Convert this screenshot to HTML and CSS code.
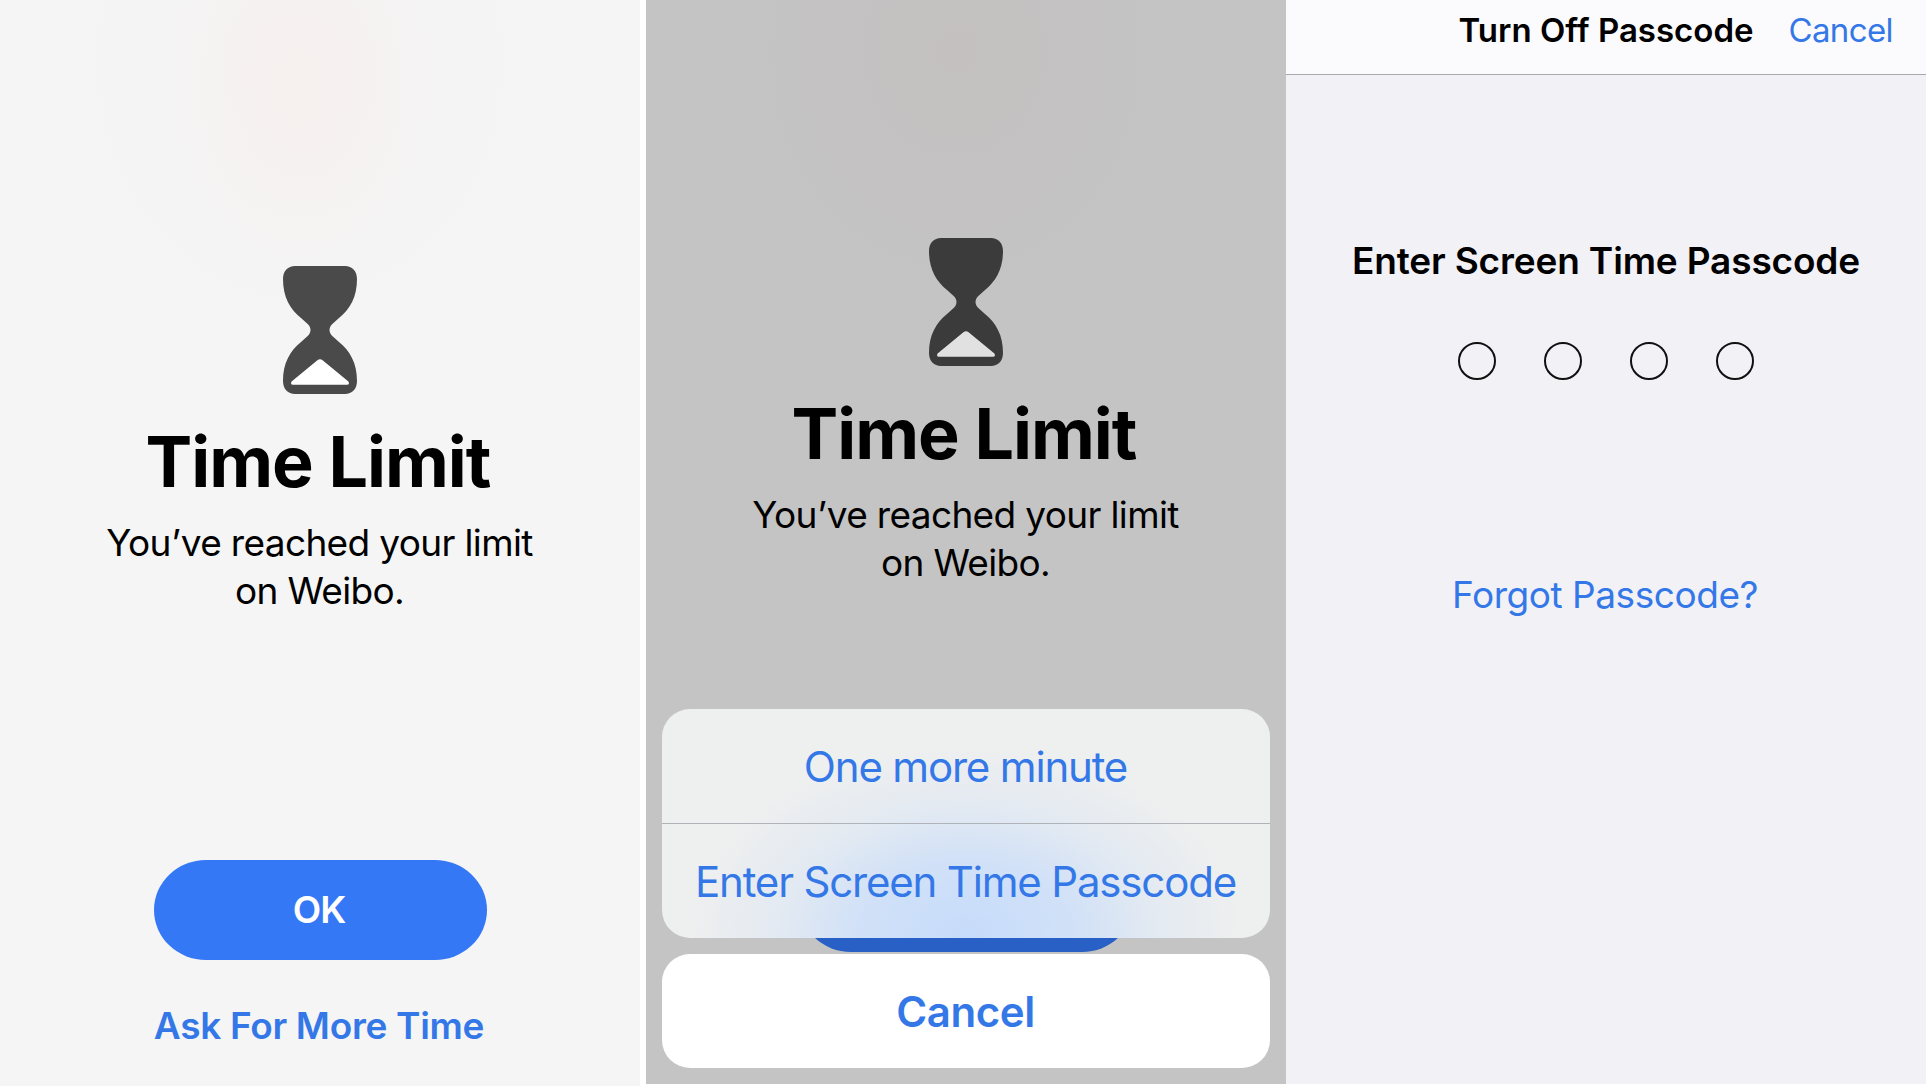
FILE: index.html
```html
<!doctype html>
<html lang="en">
<head>
<meta charset="utf-8">
<title>Screen Time</title>
<link rel="stylesheet" href="styles.css">
</head>
<body>
<div class="screens">

  <section class="screen limit">
    <svg class="hourglass" viewBox="0 0 74 128">
      <path class="glass" d="M12 0H62C69 0 74 5 74 13C74 31 67 43 56 52L51 56.500C45 61 45 67 51 71.500L56 76C67 85 74 97 74 115C74 123 69 128 62 128H12C5 128 0 123 0 115C0 97 7 85 18 76L23 71.500C29 67 29 61 23 56.500L18 52C7 43 0 31 0 13C0 5 5 0 12 0Z"/>
      <path class="sand" d="M34.4 94.3Q37 92 39.6 94.3L65.4 115.4Q67 118.5 64 118.7H10Q7 118.5 8.600 115.4Z"/>
    </svg>
    <h1>Time Limit</h1>
    <p class="message">You’ve reached your limit<br>on Weibo.</p>
    <button class="ok">OK</button>
    <a class="ask">Ask For More Time</a>
  </section>

  <section class="screen limit dimmed">
    <svg class="hourglass" viewBox="0 0 74 128">
      <path class="glass" d="M12 0H62C69 0 74 5 74 13C74 31 67 43 56 52L51 56.500C45 61 45 67 51 71.500L56 76C67 85 74 97 74 115C74 123 69 128 62 128H12C5 128 0 123 0 115C0 97 7 85 18 76L23 71.500C29 67 29 61 23 56.500L18 52C7 43 0 31 0 13C0 5 5 0 12 0Z"/>
      <path class="sand" d="M34.4 94.3Q37 92 39.6 94.3L65.4 115.4Q67 118.5 64 118.7H10Q7 118.5 8.600 115.4Z"/>
    </svg>
    <h1>Time Limit</h1>
    <p class="message">You’ve reached your limit<br>on Weibo.</p>
    <div class="ok"></div>
    <div class="sheet">
      <div class="actions">
        <a class="minute">One more minute</a>
        <a class="enter">Enter Screen Time Passcode</a>
      </div>
      <a class="dismiss">Cancel</a>
    </div>
  </section>

  <section class="screen passcode">
    <header class="navbar">
      <h2>Turn Off Passcode</h2>
      <a class="nav-cancel">Cancel</a>
    </header>
    <h3>Enter Screen Time Passcode</h3>
    <div class="digits">
      <span></span>
      <span></span>
      <span></span>
      <span></span>
    </div>
    <a class="forgot">Forgot Passcode?</a>
  </section>

</div>
</body>
</html>
```
FILE: styles.css
```css
body,
h1,
h2,
h3,
p {
    margin: 0;
    padding: 0;
}
body {
    background: #fff;
    font-family: Inter, "Liberation Sans", sans-serif;
    font-size: 37px;
    line-height: 48px;
    color: #000;
}
a {
    color: #3478e8;
    white-space: nowrap;
}
.screens {
    display: flex;
    align-items: flex-start;
    width: 1926px;
    height: 1086px;
    overflow: hidden;
}
.screen {
    box-sizing: border-box;
    display: flex;
    flex-direction: column;
    align-items: center;
    position: relative;
    width: 640px;
    height: 1084px;
}

/* time limit */
.limit {
    height: 1086px;
    padding: 266px 0 36px;
    margin-right: 6px;
    background:
        radial-gradient(ellipse 130px 180px at 300px 90px, rgba(248, 238, 234, .5), rgba(248, 238, 234, 0)),
        radial-gradient(ellipse 230px 270px at 300px 60px, rgba(244, 240, 241, .7), rgba(244, 240, 241, 0)),
        #f5f5f5;
    text-align: center;
}
.hourglass {
    width: 74px;
    height: 128px;
    flex: none;
}
.glass {
    fill: #4a4a4a;
}
.sand {
    fill: #fff;
}
h1 {
    margin-top: 25px;
    padding-right: 4px;
    font-size: 70px;
    line-height: 85px;
    font-weight: 700;
    letter-spacing: -1px;
}
.message {
    margin-top: 15px;
    padding-right: 1px;
    letter-spacing: -0.65px;
}
.ok {
    width: 333px;
    height: 100px;
    margin-top: auto;
    padding: 0 2px 0 0;
    border: 0;
    border-radius: 52px / 50px;
    background: #3478f6;
    color: #fff;
    font: 600 37px/48px Inter, "Liberation Sans", sans-serif;
    letter-spacing: -1px;
}
.ask {
    margin-top: 42px;
    padding-right: 2px;
    font-weight: 600;
    letter-spacing: -0.3px;
}

/* action sheet */
.dimmed {
    height: 1084px;
    padding: 238px 0 132px;
    margin-right: 0;
    background:
        radial-gradient(ellipse 230px 270px at 310px 50px, rgba(196, 188, 189, .5), rgba(196, 188, 189, 0)),
        #c4c4c4;
}
.dimmed .glass {
    fill: #3b3b3b;
}
.dimmed .sand {
    fill: #e1e1e1;
}
.dimmed .ok {
    background: #2960c5;
}
.sheet {
    position: absolute;
    left: 16px;
    right: 16px;
    bottom: 16px;
    display: flex;
    flex-direction: column;
    gap: 16px;
    font-size: 42px;
    letter-spacing: -1.18px;
}
.sheet a {
    box-sizing: border-box;
    display: flex;
    align-items: center;
    justify-content: center;
    height: 114px;
    padding: 2px 1px 0 0;
}
.actions {
    border-radius: 28px;
    background:
        radial-gradient(ellipse 275px 185px at 50% 98%, #c7dcfb, rgba(203, 222, 249, .85) 38%, rgba(215, 228, 245, .45) 70%, rgba(222, 230, 240, 0)),
        #eeefef;
}
.sheet .enter {
    height: 115px;
    border-top: 1px solid #b0b3b7;
}
.sheet .dismiss {
    border-radius: 28px;
    background: #fff;
    font-weight: 600;
    letter-spacing: -0.4px;
}

/* passcode entry */
.passcode {
    background: #f2f1f6;
}
.navbar {
    box-sizing: border-box;
    display: grid;
    grid-template-columns: 1fr auto 1fr;
    align-self: stretch;
    height: 75px;
    padding: 6px 33px 0;
    border-bottom: 1px solid #a9a9ab;
    background: #fbfbfd;
    font-size: 33px;
}
h2 {
    grid-column: 2;
    font-size: 33px;
    font-weight: 600;
}
.nav-cancel {
    justify-self: end;
    letter-spacing: -0.6px;
}
h3 {
    margin-top: 162px;
    font-size: 37px;
    font-weight: 600;
    letter-spacing: -0.15px;
    white-space: nowrap;
}
.digits {
    display: flex;
    gap: 48px;
    margin-top: 57px;
}
.digits span {
    box-sizing: border-box;
    width: 38px;
    height: 38px;
    border: 2px solid #111;
    border-radius: 50%;
}
.forgot {
    margin-top: 191px;
    padding-right: 2px;
    letter-spacing: -0.45px;
}
```
